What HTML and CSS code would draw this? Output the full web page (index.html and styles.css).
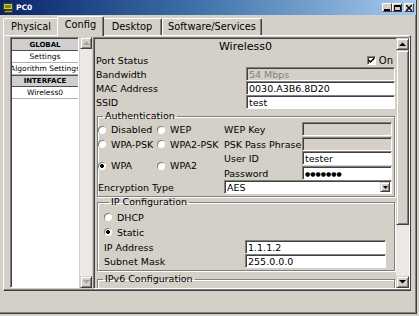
FILE: index.html
```html
<!DOCTYPE html>
<html>
<head>
<meta charset="utf-8">
<title>PC0</title>
<link rel="stylesheet" href="styles.css">
</head>
<body>
<div class="window">
  <div class="titlebar">
    <svg class="appicon" viewBox="0 0 12 12" width="12" height="12">
      <rect x="1.5" y="1.5" width="9" height="6" fill="#d6c23c" stroke="#3e4410" stroke-width="1"/>
      <rect x="3" y="3" width="6" height="3" fill="#6f8c2c"/>
      <rect x="2.5" y="8.5" width="8" height="2" fill="#b8a838" stroke="#3e4410" stroke-width="1"/>
    </svg>
    <span class="title">PC0</span>
    <div class="tb-buttons">
      <span class="tbtn"><svg width="6" height="6" viewBox="0 0 6 6"><rect x="0" y="4" width="6" height="2" fill="#000"/></svg></span>
      <span class="tbtn"><svg width="7" height="6" viewBox="0 0 7 6"><path d="M0.5 0.5h6v5h-6z M0.5 1.5h6" fill="none" stroke="#000" stroke-width="1"/></svg></span>
      <span class="tbtn close"><svg width="6" height="6" viewBox="0 0 6 6"><path d="M0 0L6 6M6 0L0 6" stroke="#000" stroke-width="1.4"/></svg></span>
    </div>
  </div>

  <div class="tabs">
    <div class="tab tab-physical">Physical</div>
    <div class="tab tab-config active">Config</div>
    <div class="tab tab-desktop">Desktop</div>
    <div class="tab tab-software">Software/Services</div>
  </div>

  <div class="tabpanel">
    <div class="sidebar">
      <div class="list">
        <div class="list-head">GLOBAL</div>
        <div class="list-item"><span>Settings</span></div>
        <div class="list-item"><span>Algorithm Settings</span></div>
        <div class="list-head">INTERFACE</div>
        <div class="list-item"><span>Wireless0</span></div>
      </div>
      <div class="vscroll disabled">
        <div class="sb-btn"><svg width="7" height="4" viewBox="0 0 7 4"><path d="M0 4L3.5 0.5L7 4z"/></svg></div>
        <div class="sb-track"></div>
        <div class="sb-btn"><svg width="7" height="4" viewBox="0 0 7 4"><path d="M0 0L3.5 3.5L7 0z"/></svg></div>
      </div>
    </div>

    <div class="main">
      <div class="content">
        <div class="header">Wireless0</div>

        <div class="row row-status">
          <span class="label">Port Status</span>
          <span class="field field-check">
            <span class="checkbox"><svg width="7" height="7" viewBox="0 0 7 7"><path d="M0.5 3L2.5 5L6.5 1" fill="none" stroke="#000" stroke-width="1.5"/></svg></span>
            <span class="check-text">On</span>
          </span>
        </div>
        <div class="row">
          <span class="label">Bandwidth</span>
          <span class="input disabled">54 Mbps</span>
        </div>
        <div class="row">
          <span class="label">MAC Address</span>
          <span class="input">0030.A3B6.8D20</span>
        </div>
        <div class="row">
          <span class="label">SSID</span>
          <span class="input">test</span>
        </div>

        <fieldset class="group group-auth">
          <legend>Authentication</legend>
          <div class="auth-grid">
            <label class="opt r1 c1"><input type="radio" class="radio" name="auth">Disabled</label>
            <label class="opt r1 c2"><input type="radio" class="radio" name="auth">WEP</label>
            <span class="alabel r1">WEP Key</span>
            <span class="input ainput r1 disabled"></span>

            <label class="opt r2 c1"><input type="radio" class="radio" name="auth">WPA-PSK</label>
            <label class="opt r2 c2"><input type="radio" class="radio" name="auth">WPA2-PSK</label>
            <span class="alabel r2">PSK Pass Phrase</span>
            <span class="input ainput r2 disabled"></span>

            <label class="opt r34 c1"><input type="radio" class="radio" name="auth" checked>WPA</label>
            <label class="opt r34 c2"><input type="radio" class="radio" name="auth">WPA2</label>
            <span class="alabel r3">User ID</span>
            <span class="input ainput r3">tester</span>
            <span class="alabel r4">Password</span>
            <span class="input ainput r4 dots">●●●●●●●</span>

            <span class="enc-label">Encryption Type</span>
            <span class="select">
              <span class="select-text">AES</span>
              <span class="select-btn"><svg width="5" height="3" viewBox="0 0 5 3"><path d="M0 0L2.5 3L5 0z"/></svg></span>
            </span>
          </div>
        </fieldset>

        <fieldset class="group group-ip">
          <legend>IP Configuration</legend>
          <label class="opt ip-opt"><input type="radio" class="radio" name="ip">DHCP</label>
          <label class="opt ip-opt"><input type="radio" class="radio" name="ip" checked>Static</label>
          <div class="ip-row">
            <span class="ip-label">IP Address</span>
            <span class="input ip-input">1.1.1.2</span>
          </div>
          <div class="ip-row">
            <span class="ip-label">Subnet Mask</span>
            <span class="input ip-input">255.0.0.0</span>
          </div>
        </fieldset>

        <fieldset class="group group-ipv6">
          <legend>IPv6 Configuration</legend>
          <div class="spacer"></div>
        </fieldset>
      </div>

      <div class="vscroll">
        <div class="sb-btn"><svg width="7" height="4" viewBox="0 0 7 4"><path d="M0 4L3.5 0.5L7 4z"/></svg></div>
        <div class="sb-thumb"></div>
        <div class="sb-track"></div>
        <div class="sb-btn"><svg width="7" height="4" viewBox="0 0 7 4"><path d="M0 0L3.5 3.5L7 0z"/></svg></div>
      </div>
    </div>
  </div>
</div>
</body>
</html>
```

FILE: styles.css
```css
* { box-sizing: border-box; margin: 0; padding: 0; }
html, body { width: 419px; height: 316px; overflow: hidden; }
body {
  background: #d4d0c8;
  font-family: "DejaVu Sans", Verdana, sans-serif;
  font-size: 9.5px;
  color: #000;
}

.window {
  width: 417px;
  height: 314px;
  display: flex;
  flex-direction: column;
  border-right: 1px solid #404040;
  border-bottom: 1px solid #404040;
  box-shadow: inset -1px -1px 0 #808080;
}

/* Title bar */
.titlebar {
  height: 15px;
  flex: none;
  display: flex;
  align-items: center;
  padding-left: 2px;
  background: linear-gradient(to right, #0a246a 0%, #3a6ea5 45%, #a6caf0 100%);
}
.appicon { flex: none; margin-right: 2px; }
.title {
  flex: 1;
  color: #fff;
  font-weight: bold;
  font-size: 7.5px;
}
.tb-buttons { display: flex; padding-right: 2px; }
.tbtn {
  width: 10px;
  height: 9px;
  display: flex;
  align-items: center;
  justify-content: center;
  background: #d4d0c8;
  border: 1px solid;
  border-color: #fff #404040 #404040 #fff;
}
.tbtn.close { margin-left: 2px; }

/* Tabs */
.tabs {
  height: 20px;
  flex: none;
  display: flex;
  align-items: flex-end;
  padding-left: 3px;
}
.tab {
  height: 17px;
  display: flex;
  align-items: center;
  justify-content: center;
  padding-bottom: 2px;
  font-size: 9.8px;
  border-top: 1px solid #fff;
  border-left: 1px solid #fff;
  border-right: 1px solid #404040;
  box-shadow: inset -1px 0 0 #808080;
  border-radius: 2px 2px 0 0;
}
.tab-physical { width: 56px; }
.tab-config { width: 47px; }
.tab-desktop { width: 60px; }
.tab-software { width: 100px; }
.tab.active {
  position: relative;
  z-index: 1;
  height: 20px;
  margin: 0 -2px -1px;
  padding-bottom: 5px;
  background: #d4d0c8;
}

/* Tab panel */
.tabpanel {
  height: 256px;
  flex: none;
  margin: 0 5px 0 3px;
  display: flex;
  gap: 1px;
  padding: 1px 0 0 6px;
  border-top: 1px solid #fff;
  border-left: 1px solid #fff;
  border-right: 1px solid #404040;
  border-bottom: 1px solid #404040;
  box-shadow: inset -1px -1px 0 #808080;
}

.sidebar {
  display: flex;
  gap: 1px;
  height: 251px;
}
.list {
  width: 69px;
  height: 251px;
  background: #fff;
  border: 1px solid;
  border-color: #808080 #fff #fff #808080;
  box-shadow: inset 1px 1px 0 #404040;
  padding: 1px 0 0 1px;
  display: flex;
  flex-direction: column;
}
.list-head {
  height: 12px;
  display: flex;
  align-items: center;
  justify-content: center;
  background: #cfcfcf;
  font-weight: bold;
  font-size: 7px;
  border-bottom: 1px solid #505050;
}
.list-item {
  height: 12px;
  display: flex;
  align-items: center;
  justify-content: center;
  overflow: hidden;
  white-space: nowrap;
  font-size: 7.5px;
  border-bottom: 1px solid #b0b0b0;
}
.list-item span { flex: none; }
.list-head + .list-item { }
.list-item + .list-head { border-top: 1px solid #505050; }

/* Scrollbars */
.vscroll {
  width: 12px;
  display: flex;
  flex-direction: column;
  flex: none;
}
.sb-btn {
  height: 12px;
  flex: none;
  display: flex;
  align-items: center;
  justify-content: center;
  background: #d4d0c8;
  border: 1px solid;
  border-color: #d4d0c8 #404040 #404040 #d4d0c8;
  box-shadow: inset 1px 1px 0 #fff, inset -1px -1px 0 #808080;
}
.sb-btn svg { fill: #000; }
.vscroll.disabled .sb-btn svg { fill: #a0a0a0; }
.sb-track {
  flex: 1;
  background: #ebe9e4;
}
.sb-thumb {
  height: 175px;
  flex: none;
  background: #d4d0c8;
  border: 1px solid;
  border-color: #d4d0c8 #404040 #404040 #d4d0c8;
  box-shadow: inset 1px 1px 0 #fff, inset -1px -1px 0 #808080;
}

/* Main panel */
.main {
  width: 317px;
  height: 252px;
  display: flex;
  border: 1px solid;
  border-color: #808080 #fff #fff #808080;
}
.main .vscroll { width: 13px; }
.content {
  flex: 1;
  overflow: hidden;
  padding-left: 1px;
  box-shadow: inset 1px 1px 0 #404040;
  display: flex;
  flex-direction: column;
}
.header {
  height: 16px;
  flex: none;
  text-align: center;
  font-size: 11px;
  line-height: 16px;
  padding-top: 1px;
}
.row {
  height: 14px;
  flex: none;
  display: flex;
  align-items: center;
}
.row-status { height: 13px; }
.label { width: 151px; flex: none; padding-left: 1px; }
.field-check {
  width: 148px;
  display: flex;
  align-items: center;
  justify-content: flex-end;
  gap: 3px;
}
.checkbox {
  width: 9px;
  height: 9px;
  display: flex;
  align-items: center;
  justify-content: center;
  background: #fff;
  border: 1px solid;
  border-color: #808080 #fff #fff #808080;
  box-shadow: inset 1px 1px 0 #404040;
}
.check-text { font-size: 10px; padding-right: 1px; }

.input {
  height: 14px;
  width: 149px;
  flex: none;
  display: flex;
  align-items: center;
  padding-left: 2px;
  background: #fff;
  border: 1px solid;
  border-color: #808080 #fff #fff #808080;
  box-shadow: inset 1px 1px 0 #404040;
  white-space: nowrap;
  overflow: hidden;
}
.input.disabled { background: #d4d0c8; color: #808080; }
.dots { font-size: 6px; letter-spacing: 0; }

/* Group boxes */
.group {
  flex: none;
  margin: 1px 1px 0 2px;
  border: 1px solid #808080;
  box-shadow: 1px 1px 0 #fff, inset 1px 1px 0 #fff;
  padding: 0;
}
.group legend {
  margin-left: 5px;
  padding: 0 2px;
  line-height: 12px;
  height: 12px;
  font-size: 9.5px;
}

.auth-grid {
  display: grid;
  grid-template-columns: 59px 67px 78px 90px;
  grid-template-rows: 15px 14px 15px 14px 14px;
  padding: 0 0 2px 0;
}
.opt {
  display: flex;
  align-items: center;
  gap: 5px;
  white-space: nowrap;
}
.radio {
  appearance: none;
  -webkit-appearance: none;
  width: 8px;
  height: 8px;
  flex: none;
  margin: 0;
  border-radius: 50%;
  background: #fff;
  box-shadow: inset 1px 1px 0 #808080;
}
.radio:checked {
  background: radial-gradient(circle, #000 0, #000 1.6px, #fff 2.2px);
}
.r1 { grid-row: 1; }
.r2 { grid-row: 2; }
.r3 { grid-row: 3; }
.r4 { grid-row: 4; }
.r34 { grid-row: 3 / 5; }
.c1 { grid-column: 1; }
.c2 { grid-column: 2; }
.alabel { grid-column: 3; display: flex; align-items: center; white-space: nowrap; }
.ainput { grid-column: 4; width: 90px; }
.enc-label { grid-row: 5; grid-column: 1 / 3; display: flex; align-items: center; }
.select {
  grid-row: 5;
  grid-column: 3 / 5;
  display: flex;
  align-items: stretch;
  background: #fff;
  border: 1px solid;
  border-color: #808080 #fff #fff #808080;
  box-shadow: inset 1px 1px 0 #404040;
  padding: 1px 1px 1px 2px;
}
.select-text { flex: 1; display: flex; align-items: center; }
.select-btn {
  width: 10px;
  display: flex;
  align-items: center;
  justify-content: center;
  background: #d4d0c8;
  border: 1px solid;
  border-color: #d4d0c8 #404040 #404040 #d4d0c8;
  box-shadow: inset 1px 1px 0 #fff, inset -1px -1px 0 #808080;
}

.group-ip { margin-top: -1px; padding: 2px 0 2px 6px; }
.ip-opt { height: 14px; margin-bottom: 1px; }
.ip-row { display: flex; align-items: center; height: 14px; }
.ip-label { width: 141px; flex: none; }
.ip-input { width: 141px; }

.group-ipv6 { margin-top: 2px; }
.spacer { height: 20px; }
```
